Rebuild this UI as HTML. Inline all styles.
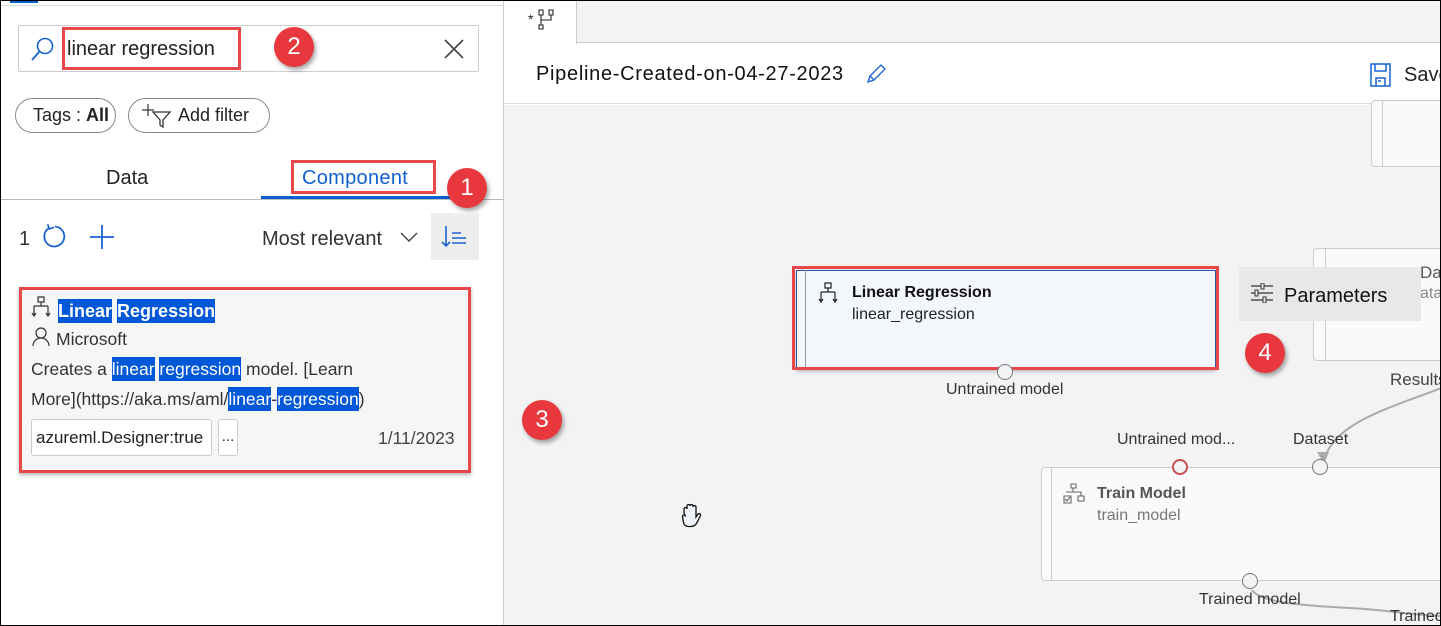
<!DOCTYPE html>
<html><head><meta charset="utf-8"><style>
*{box-sizing:border-box;margin:0;padding:0}
body{width:1441px;height:626px;overflow:hidden;font-family:"Liberation Sans",sans-serif;background:#fff;position:relative;color:#222}
.a{position:absolute;white-space:nowrap}
.badge{position:absolute;width:40px;height:40px;border-radius:50%;background:#e8383d;color:#fff;font-size:24px;text-align:center;line-height:40px;box-shadow:2px 3px 4px rgba(0,0,0,.35)}
.red{position:absolute;border:3px solid #e8474b}
.hl{background:#0057d8;color:#fff;padding:2px 0}
.pill{position:absolute;border:1px solid #888;border-radius:18px;height:35px;font-size:18px;line-height:33px;padding:0 16px;white-space:nowrap}
</style></head><body>
<div class="a" style="left:0;top:0;width:1441px;height:626px;border:1px solid #000;z-index:50;pointer-events:none"></div>
<!-- left panel -->
<div class="a" style="left:10px;top:0;width:28px;height:3px;background:#0a5fd0"></div>
<div class="a" style="left:0;top:5px;width:503px;height:1px;background:#ddd"></div>
<div class="a" style="left:18px;top:25px;width:461px;height:47px;border:1px solid #ccc;border-radius:2px"></div>
<svg class="a" style="left:30px;top:36px" width="26" height="28" viewBox="0 0 26 28"><circle cx="15" cy="10" r="7.5" fill="none" stroke="#1a62d0" stroke-width="1.6"/><line x1="9.5" y1="15.5" x2="2" y2="24" stroke="#1a62d0" stroke-width="1.8"/></svg>
<div class="a" style="left:67px;top:38px;font-size:20px">linear regression</div>
<div class="red" style="left:62px;top:27px;width:179px;height:43px"></div>
<div class="badge" style="left:274px;top:27px">2</div>
<svg class="a" style="left:443px;top:38px" width="22" height="22"><path d="M2 2L20 20M20 2L2 20" stroke="#444" stroke-width="1.6"/></svg>
<div class="pill" style="left:15px;top:98px;width:101px;padding:0 0 0 17px">Tags : <b>All</b></div>
<div class="pill" style="left:128px;top:98px;width:142px;padding-left:49px">Add filter</div>
<svg class="a" style="left:140px;top:103px" width="40" height="26"><path d="M4 1v12M-2 7h12" stroke="#333" stroke-width="1.2" transform="translate(4,0)"/><path d="M13 9h17l-7 8v7l-3-2v-5z" fill="none" stroke="#333" stroke-width="1.3"/></svg>
<div class="a" style="left:106px;top:167px;font-size:20px">Data</div>
<div class="a" style="left:302px;top:167px;font-size:20px;color:#1060d0;letter-spacing:0.3px">Component</div>
<div class="red" style="left:291px;top:160px;width:145px;height:34px"></div>
<div class="a" style="left:0;top:199px;width:503px;height:1px;background:#bbb"></div>
<div class="a" style="left:261px;top:196px;width:190px;height:3px;background:#0a5fd0"></div>
<div class="badge" style="left:447px;top:168px">1</div>
<div class="a" style="left:19px;top:228px;font-size:20px;color:#333">1</div>
<svg class="a" style="left:40px;top:223px" width="28" height="28"><path d="M9 5A10 10 0 1 0 15 3.5" fill="none" stroke="#1a62d0" stroke-width="1.8"/><path d="M9 1v5h5" fill="none" stroke="#1a62d0" stroke-width="1.6" transform="rotate(-20 9 5)"/></svg>
<svg class="a" style="left:89px;top:224px" width="26" height="26"><path d="M13 1v24M1 13h24" stroke="#1a62d0" stroke-width="1.8"/></svg>
<div class="a" style="left:262px;top:228px;font-size:20px;color:#333">Most relevant</div>
<svg class="a" style="left:399px;top:230px" width="20" height="14"><path d="M2 3l8 8 8-8" fill="none" stroke="#444" stroke-width="1.4"/></svg>
<div class="a" style="left:431px;top:213px;width:48px;height:47px;background:#eee"></div>
<svg class="a" style="left:440px;top:222px" width="30" height="30"><path d="M6 4v20M2 20l4 4 4-4M12 11h9M12 16h14M12 21h14" fill="none" stroke="#1a62d0" stroke-width="1.6"/></svg>
<!-- card -->
<div class="a" style="left:19px;top:287px;width:452px;height:186px;background:#f6f6f6;box-shadow:0 2px 4px rgba(0,0,0,.3)"></div>
<div class="red" style="left:19px;top:287px;width:452px;height:186px"></div>
<svg class="a" style="left:31px;top:296px" width="22" height="22"><path d="M7 1h6v5H7zM10 6v4M3 10h14M3 10v9M17 10v9M1 17l2 3 2-3M15 17l2 3 2-3" fill="none" stroke="#333" stroke-width="1.2"/></svg>
<div class="a" style="left:58px;top:301px;font-size:18px;font-weight:bold"><span class="hl">Linear</span> <span class="hl">Regression</span></div>
<svg class="a" style="left:31px;top:327px" width="20" height="20"><circle cx="10" cy="6" r="5" fill="none" stroke="#333" stroke-width="1.2"/><path d="M2 19a8 8 0 0 1 16 0" fill="none" stroke="#333" stroke-width="1.2"/></svg>
<div class="a" style="left:56px;top:329px;font-size:17.5px;color:#333">Microsoft</div>
<div class="a" style="left:31px;top:359px;font-size:17.5px;color:#333">Creates a <span class="hl">linear</span> <span class="hl">regression</span> model. [Learn</div>
<div class="a" style="left:31px;top:389px;font-size:17.5px;color:#333">More](https://aka.ms/aml/<span class="hl">linear</span>-<span class="hl">regression</span>)</div>
<div class="a" style="left:31px;top:419px;width:181px;height:37px;background:#fff;border:1px solid #ccc;border-radius:3px;font-size:17px;line-height:35px;padding-left:4px">azureml.Designer:true</div>
<div class="a" style="left:218px;top:419px;width:20px;height:37px;background:#fff;border:1px solid #ccc;border-radius:3px;font-size:15px;line-height:33px;text-align:center">...</div>
<div class="a" style="left:378px;top:428px;font-size:17.5px;color:#444">1/11/2023</div>
<!-- right side -->
<div class="a" style="left:503px;top:0;width:1px;height:626px;background:#ccc"></div>
<div class="a" style="left:504px;top:0;width:937px;height:43px;background:#f3f3f3;border-bottom:1px solid #ccc"></div>
<div class="a" style="left:504px;top:0;width:73px;height:44px;background:#fff;border-right:1px solid #ccc"></div>
<div class="a" style="left:528px;top:11px;font-size:14px">*</div>
<svg class="a" style="left:535px;top:8px" width="26" height="22"><path d="M4 2h4v5H4zM14 2h4v5h-4zM6 7v10M6 12h10V7M4 17h4v4H4z" fill="none" stroke="#222" stroke-width="1.1"/></svg>
<div class="a" style="left:504px;top:44px;width:937px;height:60px;background:#fff;border-bottom:1px solid #ddd"></div>
<div class="a" style="left:536px;top:63px;font-size:20px;color:#111;letter-spacing:0.7px">Pipeline-Created-on-04-27-2023</div>
<svg class="a" style="left:864px;top:62px" width="24" height="24"><path d="M4 20l2-6 11-11 4 4-11 11zM6 14l4 4" fill="none" stroke="#1a62d0" stroke-width="1.3"/></svg>
<svg class="a" style="left:1369px;top:62px" width="24" height="26"><path d="M2 2h19v22H2zM6 2v7h11V2M7 24v-8h9v8M9 19h3" fill="none" stroke="#1a62d0" stroke-width="1.5"/></svg>
<div class="a" style="left:1404px;top:64px;font-size:20px;color:#222">Save</div>
<div class="a" style="left:504px;top:105px;width:937px;height:521px;background:#f3f3f3"></div>
<!-- canvas nodes -->
<div class="a" style="left:1371px;top:100px;width:80px;height:67px;background:#fafafa;border:1px solid #ccc;border-radius:4px"></div>
<div class="a" style="left:1382px;top:100px;width:1px;height:67px;background:#ccc"></div>
<div class="a" style="left:1313px;top:248px;width:140px;height:113px;background:#fafafa;border:1px solid #ccc;border-radius:4px"></div>
<div class="a" style="left:1325px;top:248px;width:1px;height:113px;background:#ccc"></div>
<div class="a" style="left:1420px;top:263px;font-size:17px;color:#555">Dat</div>
<div class="a" style="left:1420px;top:285px;font-size:16px;color:#888">ata</div>
<div class="a" style="left:1390px;top:370px;font-size:17px;color:#444">Results</div>
<svg class="a" style="left:1290px;top:380px" width="151" height="100"><path d="M151 8C110 25 45 40 34 80" fill="none" stroke="#aaa" stroke-width="2"/><path d="M27 72l7 12 5-12z" fill="#aaa"/></svg>
<div class="a" style="left:796px;top:270px;width:420px;height:99px;background:#f3f7fb;border:1px solid #2a56a8;box-shadow:0 2px 4px rgba(0,0,0,.3)"></div>
<div class="a" style="left:805px;top:270px;width:1px;height:99px;background:#999"></div>
<div class="red" style="left:792px;top:266px;width:427px;height:104px"></div>
<svg class="a" style="left:818px;top:282px" width="22" height="22"><path d="M7 1h6v5H7zM10 6v4M3 10h14M3 10v9M17 10v9M1 17l2 3 2-3M15 17l2 3 2-3" fill="none" stroke="#222" stroke-width="1.2"/></svg>
<div class="a" style="left:852px;top:284px;font-size:16px;font-weight:bold;color:#111">Linear Regression</div>
<div class="a" style="left:852px;top:306px;font-size:16px;color:#222">linear_regression</div>
<div class="a" style="left:997px;top:364px;width:16px;height:16px;border-radius:50%;border:1.5px solid #777;background:#f3f3f3"></div>
<div class="a" style="left:946px;top:381px;font-size:16px;color:#333">Untrained model</div>
<div class="a" style="left:1239px;top:267px;width:182px;height:54px;background:#e8e8e8"></div>
<svg class="a" style="left:1251px;top:283px" width="22" height="20"><path d="M0 3h22M0 10h22M0 17h22" stroke="#333" stroke-width="1.2"/><rect x="10" y="0" width="3" height="6" fill="#e8e8e8" stroke="#333"/><rect x="4" y="7" width="3" height="6" fill="#e8e8e8" stroke="#333"/><rect x="12" y="14" width="3" height="6" fill="#e8e8e8" stroke="#333"/></svg>
<div class="a" style="left:1284px;top:285px;font-size:20px;color:#111;font-weight:bold;font-weight:500">Parameters</div>
<div class="badge" style="left:1245px;top:333px">4</div>
<div class="badge" style="left:522px;top:400px">3</div>
<div class="a" style="left:1117px;top:431px;font-size:16px;color:#333">Untrained mod...</div>
<div class="a" style="left:1293px;top:431px;font-size:16px;color:#333">Dataset</div>
<div class="a" style="left:1041px;top:467px;width:410px;height:114px;background:#fafafa;border:1.5px solid #ccc;border-radius:4px"></div>
<div class="a" style="left:1051px;top:467px;width:1px;height:114px;background:#ccc"></div>
<div class="a" style="left:1172px;top:459px;width:16px;height:16px;border-radius:50%;border:2.5px solid #c85050;background:#f3f3f3"></div>
<div class="a" style="left:1312px;top:459px;width:16px;height:16px;border-radius:50%;border:1.5px solid #777;background:#f3f3f3"></div>
<svg class="a" style="left:1063px;top:483px" width="24" height="24"><path d="M8 1h5v4H8zM10 5v4M3 9h15v4M1 13h7v7H1zM15 13h6v5h-6zM2 16l2 2 3-4" fill="none" stroke="#666" stroke-width="1.1"/></svg>
<div class="a" style="left:1097px;top:485px;font-size:16px;font-weight:bold;color:#555">Train Model</div>
<div class="a" style="left:1097px;top:507px;font-size:16px;color:#777">train_model</div>
<div class="a" style="left:1242px;top:573px;width:16px;height:16px;border-radius:50%;border:1.5px solid #777;background:#f3f3f3"></div>
<svg class="a" style="left:1250px;top:588px" width="191" height="38"><path d="M2 2C10 15 60 18 100 20S150 26 191 28" fill="none" stroke="#aaa" stroke-width="2"/></svg>
<div class="a" style="left:1199px;top:591px;font-size:16px;color:#333">Trained model</div>
<div class="a" style="left:1390px;top:608px;font-size:16px;color:#333">Trained</div>
<svg class="a" style="left:678px;top:503px" width="26" height="28"><path d="M6 10v-4a1.5 1.5 0 0 1 3 0v-3a1.5 1.5 0 0 1 3 0v0a1.5 1.5 0 0 1 3 0v1a1.5 1.5 0 0 1 3 0v10l2-3a1.5 1.5 0 0 1 2.5 1.5l-4 8q-2 3-6 3h-2q-4 0-5-4l-1-6a1.5 1.5 0 0 1 3 0z" fill="#eef3fa" stroke="#111" stroke-width="1.3"/></svg>
</body></html>
